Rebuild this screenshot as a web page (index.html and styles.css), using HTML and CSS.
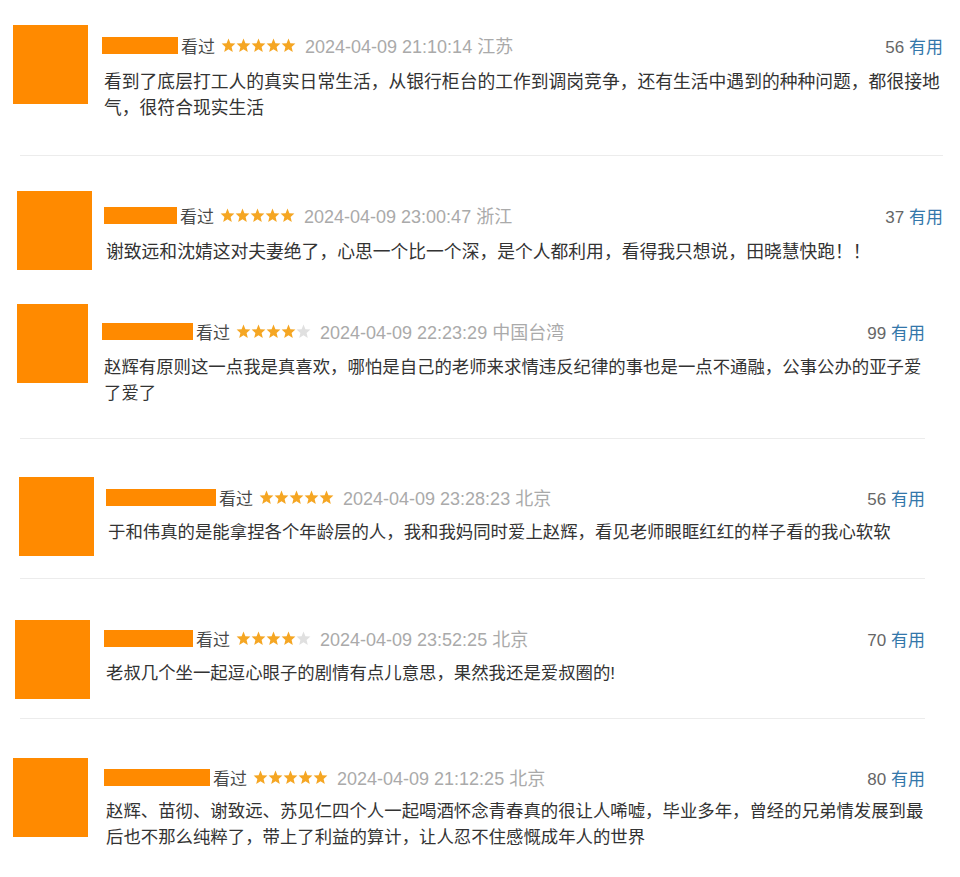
FILE: index.html
```html
<!DOCTYPE html>
<html>
<head>
	<meta charset="utf-8">
	<title>短评</title>
	<link rel="stylesheet" href="styles.css">
</head>
<body>
	<svg class="defs" width="0" height="0">
		<symbol id="star" viewBox="0 0 15 15">
			<polygon points="7.5,0.6 9.4,5.2 14.4,5.6 10.6,8.9 11.8,13.9 7.5,11.2 3.2,13.9 4.4,8.9 0.6,5.6 5.6,5.2"/>
		</symbol>
	</svg>

	<main class="comments">
		<div class="review big r1">
			<div class="avatar"></div>
			<div class="body">
				<div class="head">
					<span class="name" style="width: 76px"></span>
					<span class="watched">看过</span>
					<span class="stars">
						<svg class="on"><use href="#star"/></svg><svg class="on"><use href="#star"/></svg><svg class="on"><use href="#star"/></svg><svg class="on"><use href="#star"/></svg><svg class="on"><use href="#star"/></svg>
					</span>
					<span class="date">2024-04-09 21:10:14 江苏</span>
					<span class="votes">56 <a href="#">有用</a></span>
				</div>
				<p class="text">看到了底层打工人的真实日常生活，从银行柜台的工作到调岗竞争，还有生活中遇到的种种问题，都很接地气，很符合现实生活</p>
			</div>
		</div>
		<div class="divider wide"></div>

		<div class="review big r2">
			<div class="avatar"></div>
			<div class="body">
				<div class="head">
					<span class="name" style="width: 73px"></span>
					<span class="watched">看过</span>
					<span class="stars">
						<svg class="on"><use href="#star"/></svg><svg class="on"><use href="#star"/></svg><svg class="on"><use href="#star"/></svg><svg class="on"><use href="#star"/></svg><svg class="on"><use href="#star"/></svg>
					</span>
					<span class="date">2024-04-09 23:00:47 浙江</span>
					<span class="votes">37 <a href="#">有用</a></span>
				</div>
				<p class="text">谢致远和沈婧这对夫妻绝了，心思一个比一个深，是个人都利用，看得我只想说，田晓慧快跑！！</p>
			</div>
		</div>

		<div class="review r3">
			<div class="avatar"></div>
			<div class="body">
				<div class="head">
					<span class="name" style="width: 91px"></span>
					<span class="watched">看过</span>
					<span class="stars">
						<svg class="on"><use href="#star"/></svg><svg class="on"><use href="#star"/></svg><svg class="on"><use href="#star"/></svg><svg class="on"><use href="#star"/></svg><svg class="off"><use href="#star"/></svg>
					</span>
					<span class="date">2024-04-09 22:23:29 中国台湾</span>
					<span class="votes">99 <a href="#">有用</a></span>
				</div>
				<p class="text">赵辉有原则这一点我是真喜欢，哪怕是自己的老师来求情违反纪律的事也是一点不通融，公事公办的亚子爱了爱了</p>
			</div>
		</div>
		<div class="divider"></div>

		<div class="review r4">
			<div class="avatar"></div>
			<div class="body">
				<div class="head">
					<span class="name" style="width: 110px"></span>
					<span class="watched">看过</span>
					<span class="stars">
						<svg class="on"><use href="#star"/></svg><svg class="on"><use href="#star"/></svg><svg class="on"><use href="#star"/></svg><svg class="on"><use href="#star"/></svg><svg class="on"><use href="#star"/></svg>
					</span>
					<span class="date">2024-04-09 23:28:23 北京</span>
					<span class="votes">56 <a href="#">有用</a></span>
				</div>
				<p class="text">于和伟真的是能拿捏各个年龄层的人，我和我妈同时爱上赵辉，看见老师眼眶红红的样子看的我心软软</p>
			</div>
		</div>
		<div class="divider"></div>

		<div class="review r5">
			<div class="avatar"></div>
			<div class="body">
				<div class="head">
					<span class="name" style="width: 89px"></span>
					<span class="watched">看过</span>
					<span class="stars">
						<svg class="on"><use href="#star"/></svg><svg class="on"><use href="#star"/></svg><svg class="on"><use href="#star"/></svg><svg class="on"><use href="#star"/></svg><svg class="off"><use href="#star"/></svg>
					</span>
					<span class="date">2024-04-09 23:52:25 北京</span>
					<span class="votes">70 <a href="#">有用</a></span>
				</div>
				<p class="text">老叔几个坐一起逗心眼子的剧情有点儿意思，果然我还是爱叔圈的!</p>
			</div>
		</div>
		<div class="divider"></div>

		<div class="review r6">
			<div class="avatar"></div>
			<div class="body">
				<div class="head">
					<span class="name" style="width: 106px"></span>
					<span class="watched">看过</span>
					<span class="stars">
						<svg class="on"><use href="#star"/></svg><svg class="on"><use href="#star"/></svg><svg class="on"><use href="#star"/></svg><svg class="on"><use href="#star"/></svg><svg class="on"><use href="#star"/></svg>
					</span>
					<span class="date">2024-04-09 21:12:25 北京</span>
					<span class="votes">80 <a href="#">有用</a></span>
				</div>
				<p class="text">赵辉、苗彻、谢致远、苏见仁四个人一起喝酒怀念青春真的很让人唏嘘，毕业多年，曾经的兄弟情发展到最后也不那么纯粹了，带上了利益的算计，让人忍不住感慨成年人的世界</p>
			</div>
		</div>
	</main>
</body>
</html>
```

FILE: styles.css
```css
/* General styles */
body {
	margin: 0;
	padding: 0;
	background: #fff;
	font-family: "Liberation Sans", "Noto Sans CJK SC", sans-serif;
	color: #333;
}

.defs {
	position: absolute;
	width: 0;
	height: 0;
}

.comments {
	padding-top: 25px;
}

/* One review */
.review {
	display: flex;
	align-items: flex-start;
	padding-right: 35px;
}

.review.big {
	padding-right: 17px;
}

.avatar {
	flex: none;
	width: 75px;
	height: 79px;
	background-color: #ff8a00;
	margin-right: 14px;
}

.body {
	flex: 1;
	min-width: 0;
}

.head {
	display: flex;
	align-items: center;
	height: 24px;
	font-size: 17px;
	white-space: nowrap;
}

.name {
	height: 17px;
	background-color: #ff8a00;
	margin-right: 3px;
}

.watched {
	color: #494949;
	margin-right: 6px;
}

.stars {
	display: flex;
	margin-right: 9px;
}

.stars svg {
	width: 15px;
	height: 15px;
}

.stars .on {
	fill: #f5a623;
}

.stars .off {
	fill: #e0e0e0;
}

.date {
	color: #aaa;
	font-size: 18px;
}

.votes {
	margin-left: auto;
	color: #666;
}

.votes a {
	color: #37a;
	text-decoration: none;
}

.text {
	margin: 12px 0 0 2px;
	font-size: 17.4px;
	line-height: 26px;
	color: #333;
}

.big .text {
	font-size: 17.8px;
}

.divider {
	height: 1px;
	background-color: #ececec;
	margin: 0 35px 0 20px;
}

.divider.wide {
	margin-right: 17px;
}

/* Spacing of each review in the list */
.r1 {
	margin-left: 13px;
	padding-bottom: 34px;
}

.r1 .body {
	padding-top: 8px;
}

.r2 {
	margin-top: 35px;
	margin-left: 17px;
}

.r2 .avatar {
	margin-right: 12px;
}

.r2 .body {
	padding-top: 12px;
}

.r3 {
	margin-top: 34px;
	margin-left: 17px;
	padding-bottom: 32px;
}

.r3 .avatar {
	width: 71px;
	margin-right: 14px;
}

.r3 .body {
	padding-top: 15px;
}

.r3 .text {
	margin-top: 11px;
}

.r4 {
	margin-top: 38px;
	margin-left: 19px;
	padding-bottom: 22px;
}

.r4 .avatar {
	margin-right: 12px;
}

.r4 .body {
	padding-top: 8px;
}

.r4 .text {
	margin-top: 10px;
}

.r5 {
	margin-top: 41px;
	margin-left: 15px;
	padding-bottom: 19px;
}

.r5 .body {
	padding-top: 6px;
}

.r5 .text {
	margin-top: 10px;
}

.r6 {
	margin-top: 39px;
	margin-left: 13px;
}

.r6 .avatar {
	margin-right: 16px;
}

.r6 .body {
	padding-top: 7px;
}

.r6 .text {
	margin-top: 9px;
}
```
